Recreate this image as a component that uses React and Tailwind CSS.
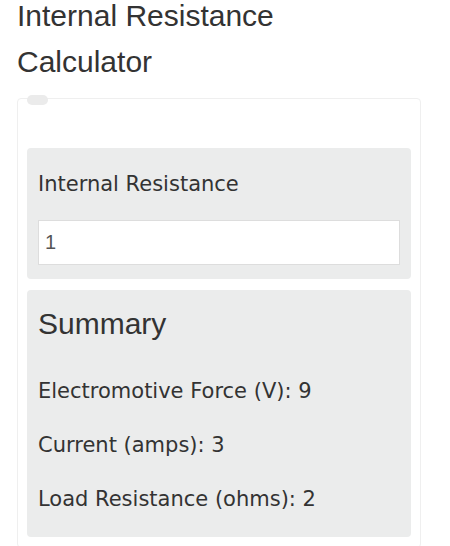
import React from 'react';

const rows = [
  { label: 'Electromotive Force (V)', value: 9 },
  { label: 'Current (amps)', value: 3 },
  { label: 'Load Resistance (ohms)', value: 2 },
];

const App = () => {
  return (
    <div className="min-h-screen bg-white text-[#333333] pl-[17px] pr-[29px] font-['Liberation_Sans',Arial,sans-serif]">
      <h1 className="max-w-[300px] text-[30px] leading-[46px] -mt-[7px]">
        Internal Resistance Calculator
      </h1>

      <div className="relative mt-[13px] border border-[#efefef] rounded-[4px] px-[9px] pt-[49px] pb-[10px]">
        <span className="absolute left-[9px] -top-[4px] w-[21px] h-[10px] rounded-full bg-[#ebebeb]"></span>

        <div className="bg-[#ebecec] rounded-[4px] px-[11px] pt-[22px] pb-[14px]">
          <label className="block font-['DejaVu_Sans',sans-serif] text-[21px] leading-[28px] text-[#333333]">
            Internal Resistance
          </label>
          <input
            type="text"
            defaultValue="1"
            className="mt-[22px] block w-full h-[45px] bg-white border border-[#dddddd] px-[6px] text-[20px] text-[#555555] outline-none"
          />
        </div>

        <div className="mt-[11px] bg-[#ebecec] rounded-[4px] px-[11px] pt-[14px] pb-[24px]">
          <h2 className="text-[30px] leading-[40px]">
            Summary
          </h2>
          <div className="mt-[33px] flex flex-col gap-[26px]">
            {rows.map((r) => (
              <p key={r.label} className="font-['DejaVu_Sans',sans-serif] text-[21px] leading-[28px]">
                {r.label}: {r.value}
              </p>
            ))}
          </div>
        </div>
      </div>
    </div>
  );
};

export default App;
